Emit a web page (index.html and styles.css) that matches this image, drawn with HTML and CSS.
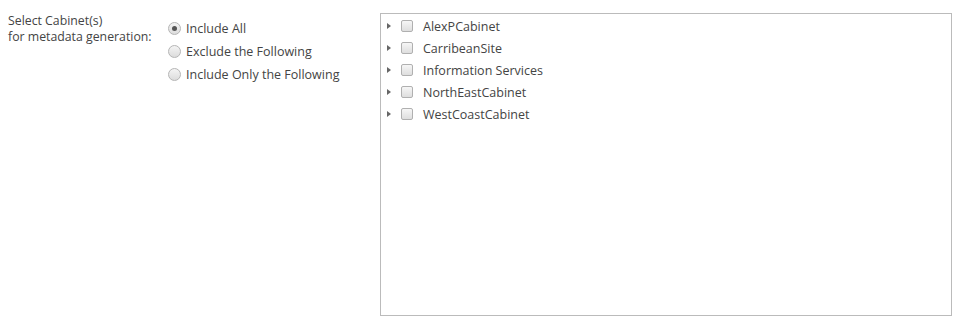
FILE: index.html
```html
<!DOCTYPE html>
<html lang="en">
<head>
    <meta charset="UTF-8">
    <title>Metadata generation</title>
    <link rel="stylesheet" href="styles.css">
</head>
<body>

<div class="form-row">
    <div class="field-label">Select Cabinet(s)<br>for metadata generation:</div>

    <!-- scope options -->
    <div class="options">
        <label class="option"><span class="radio checked"></span>Include All</label>
        <label class="option"><span class="radio"></span>Exclude the Following</label>
        <label class="option"><span class="radio"></span>Include Only the Following</label>
    </div>

    <!-- cabinet tree -->
    <div class="tree">
        <div class="node"><span class="arrow"></span><span class="check"></span>AlexPCabinet</div>
        <div class="node"><span class="arrow"></span><span class="check"></span>CarribeanSite</div>
        <div class="node"><span class="arrow"></span><span class="check"></span>Information Services</div>
        <div class="node"><span class="arrow"></span><span class="check"></span>NorthEastCabinet</div>
        <div class="node"><span class="arrow"></span><span class="check"></span>WestCoastCabinet</div>
    </div>
</div>

</body>
</html>
```

FILE: styles.css
```css
body {
    font-family: "Open Sans", "Noto Sans", sans-serif;
    font-size: 12px;
    color: #444;
    margin: 0;
    padding: 0;
    background-color: white;
}

.form-row {
    display: flex;
    align-items: flex-start;
    padding: 13px 0 0 8px;
}

.field-label {
    width: 160px;
    line-height: 16px;
    font-size: 12.3px;
}

.options {
    width: 212px;
    padding-top: 4px;
}

.option {
    display: flex;
    align-items: center;
    height: 23px;
    font-size: 12.5px;
}

.radio {
    width: 11px;
    height: 11px;
    border: 1px solid #b5b5b5;
    border-radius: 50%;
    background: linear-gradient(#f4f4f4, #dcdcdc);
    margin-right: 5px;
    box-sizing: content-box;
    position: relative;
}

.radio.checked::after {
    content: "";
    position: absolute;
    left: 3px;
    top: 3px;
    width: 5px;
    height: 5px;
    border-radius: 50%;
    background-color: #555;
}

.tree {
    width: 570px;
    height: 300px;
    border: 1px solid #bbb;
    padding-top: 1px;
    box-sizing: content-box;
}

.node {
    display: flex;
    align-items: center;
    height: 22px;
    font-size: 12.5px;
}

.arrow {
    width: 0;
    height: 0;
    border-top: 3.5px solid transparent;
    border-bottom: 3.5px solid transparent;
    border-left: 4px solid #666;
    margin-left: 6px;
    margin-right: 10px;
}

.check {
    width: 10px;
    height: 10px;
    border: 1px solid #b0b0b0;
    border-radius: 2px;
    background: linear-gradient(#f6f6f6, #dedede);
    margin-right: 10px;
}
```
